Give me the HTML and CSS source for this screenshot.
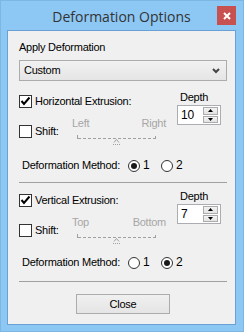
FILE: index.html
```html
<!DOCTYPE html>
<html lang="en">
  <head>
    <meta charset="UTF-8" />
    <meta name="viewport" content="width=device-width, initial-scale=1.0" />
    <title>Deformation Options</title>
    <link rel="stylesheet" href="styles.css">
  </head>
  <body>
    <div class="window">
      <div class="titlebar">
        <span></span>
        <div class="title">Deformation Options</div>
        <div class="close-x">
          <svg width="8" height="8" viewBox="0 0 8 8"><path d="M1 1L7 7M7 1L1 7" stroke="#fff" stroke-width="2"/></svg>
        </div>
      </div>

      <div class="client">
        <div class="label">Apply Deformation</div>
        <div class="select">
          <span>Custom</span>
          <svg width="8" height="6" viewBox="0 0 8 6"><path d="M1 1l3 3 3-3" stroke="#444" stroke-width="2" fill="none"/></svg>
        </div>

        <!-- horizontal -->
        <div class="section">
          <div class="left">
            <div class="check-row">
              <span class="checkbox"><svg width="11" height="11" viewBox="0 0 11 11"><path d="M1.5 5l2.5 3 5.5-6.5" stroke="#000" stroke-width="2" fill="none"/></svg></span>
              <span>Horizontal Extrusion:</span>
            </div>
            <div class="shift-row">
              <div class="check-row shift">
                <span class="checkbox"></span>
                <span>Shift:</span>
              </div>
              <div class="slider">
                <div class="slider-ends"><span>Left</span><span>Right</span></div>
                <svg class="track" width="96" height="12" viewBox="0 0 96 12">
                  <path d="M7.5 2v4M85.5 3v3" stroke="#a0a0a0"/>
                  <path d="M8 5.5h77" stroke="#a0a0a0" stroke-dasharray="3 2"/>
                  <path d="M44 9.5l2.5-3 2.5 3" stroke="#a0a0a0" fill="none"/>
                  <path d="M43 11.5h7" stroke="#a0a0a0" stroke-dasharray="1 1"/>
                </svg>
              </div>
            </div>
          </div>
          <div class="depth">
            <div class="depth-label">Depth</div>
            <div class="spin">
              <span>10</span>
              <div class="spin-btns">
                <div class="spin-btn"><svg width="5" height="3" viewBox="0 0 5 3"><path d="M0 3h5L2.5 0z" fill="#000"/></svg></div>
                <div class="spin-btn"><svg width="5" height="3" viewBox="0 0 5 3"><path d="M0 0h5L2.5 3z" fill="#000"/></svg></div>
              </div>
            </div>
          </div>
        </div>
        <div class="method-row first">
          <span class="method-text">Deformation Method:</span>
          <span class="radio-opt"><span class="radio checked"></span>1</span>
          <span class="radio-opt"><span class="radio"></span>2</span>
        </div>
        <div class="separator first"></div>

        <!-- vertical -->
        <div class="section second">
          <div class="left">
            <div class="check-row">
              <span class="checkbox"><svg width="11" height="11" viewBox="0 0 11 11"><path d="M1.5 5l2.5 3 5.5-6.5" stroke="#000" stroke-width="2" fill="none"/></svg></span>
              <span>Vertical Extrusion:</span>
            </div>
            <div class="shift-row">
              <div class="check-row shift">
                <span class="checkbox"></span>
                <span>Shift:</span>
              </div>
              <div class="slider">
                <div class="slider-ends"><span>Top</span><span>Bottom</span></div>
                <svg class="track" width="96" height="12" viewBox="0 0 96 12">
                  <path d="M7.5 2v4M85.5 3v3" stroke="#a0a0a0"/>
                  <path d="M8 5.5h77" stroke="#a0a0a0" stroke-dasharray="3 2"/>
                  <path d="M44 9.5l2.5-3 2.5 3" stroke="#a0a0a0" fill="none"/>
                  <path d="M43 11.5h7" stroke="#a0a0a0" stroke-dasharray="1 1"/>
                </svg>
              </div>
            </div>
          </div>
          <div class="depth">
            <div class="depth-label">Depth</div>
            <div class="spin">
              <span>7</span>
              <div class="spin-btns">
                <div class="spin-btn"><svg width="5" height="3" viewBox="0 0 5 3"><path d="M0 3h5L2.5 0z" fill="#000"/></svg></div>
                <div class="spin-btn"><svg width="5" height="3" viewBox="0 0 5 3"><path d="M0 0h5L2.5 3z" fill="#000"/></svg></div>
              </div>
            </div>
          </div>
        </div>
        <div class="method-row">
          <span class="method-text">Deformation Method:</span>
          <span class="radio-opt"><span class="radio"></span>1</span>
          <span class="radio-opt"><span class="radio checked"></span>2</span>
        </div>
        <div class="separator"></div>

        <button class="close-btn">Close</button>
      </div>
    </div>
  </body>
</html>
```

FILE: styles.css
```css
body {
  margin: 0;
  font-family: "Liberation Sans", Arial, sans-serif;
  font-size: 11px;
  line-height: 13px;
  letter-spacing: -0.25px;
  color: #000;
}

.window {
  width: 244px;
  height: 332px;
  box-sizing: border-box;
  background-color: #8dc7f4;
  border: 1px solid #7db5e3;
  padding: 0 7px 6px 6px;
  display: flex;
  flex-direction: column;
}

.titlebar {
  height: 29px;
  display: grid;
  grid-template-columns: 1fr auto 1fr;
}

.titlebar .title {
  font-family: "Open Sans", "Noto Sans", sans-serif;
  font-size: 14px;
  line-height: 29px;
  letter-spacing: 0;
  color: #333;
  padding-top: 1px;
}

.close-x {
  justify-self: end;
  margin-top: 5px;
  width: 19px;
  height: 19px;
  background-color: #c75050;
  display: flex;
  justify-content: center;
  align-items: center;
}

.client {
  flex: 1;
  background-color: #f0f0f0;
  border: 1px solid #6aa0d3;
  padding: 10px 8px 0 11px;
  display: flex;
  flex-direction: column;
}

.select {
  margin-top: 6px;
  height: 21px;
  box-sizing: border-box;
  border: 1px solid #acacac;
  background: linear-gradient(#f2f2f2, #e5e5e5);
  display: flex;
  align-items: center;
  justify-content: space-between;
  padding: 0 6px 0 4px;
}

.section {
  display: flex;
  margin-top: 10px;
}

.section.second {
  margin-top: 7px;
}

.left {
  width: 158px;
}

.check-row {
  display: flex;
  align-items: center;
  gap: 3px;
  margin-top: 4px;
}

.checkbox {
  width: 13px;
  height: 13px;
  box-sizing: border-box;
  border: 1px solid #333;
  background-color: #fff;
  display: flex;
}

.shift-row {
  display: flex;
  align-items: flex-start;
  margin-top: 9px;
}

.check-row.shift {
  width: 51px;
  margin-top: 8px;
}

.slider {
  width: 96px;
}

.slider-ends {
  display: flex;
  justify-content: space-between;
  color: #a6a6a6;
  padding-left: 2px;
}

.slider .track {
  display: block;
  margin-top: 3px;
}

.depth {
  display: flex;
  flex-direction: column;
}

.depth-label {
  padding-left: 3px;
}

.spin {
  margin-top: 1px;
  width: 44px;
  height: 20px;
  box-sizing: border-box;
  border: 1px solid #abadb3;
  background-color: #fff;
  display: flex;
  justify-content: space-between;
  padding: 1px 2px 1px 3px;
}

.spin span {
  line-height: 17px;
  font-size: 12px;
}

.spin-btns {
  display: flex;
  flex-direction: column;
  gap: 1px;
}

.spin-btn {
  width: 15px;
  height: 8px;
  box-sizing: border-box;
  border: 1px solid #acacac;
  background: linear-gradient(#f3f3f3, #e3e3e3);
  display: flex;
  justify-content: center;
  align-items: center;
}

.method-row {
  display: flex;
  align-items: center;
  margin-top: 12px;
  padding-left: 3px;
}

.method-row.first {
  margin-top: 14px;
}

.method-text {
  width: 106px;
}

.radio-opt {
  width: 33px;
  display: flex;
  align-items: center;
  gap: 3px;
  font-size: 12px;
}

.radio {
  width: 12px;
  height: 12px;
  box-sizing: border-box;
  border: 1px solid #333;
  border-radius: 50%;
  background-color: #fff;
  display: flex;
  justify-content: center;
  align-items: center;
}

.radio.checked::after {
  content: "";
  width: 6px;
  height: 6px;
  border-radius: 50%;
  background-color: #1a1a1a;
}

.separator {
  margin-top: 12px;
  border-top: 1px solid #a0a0a0;
}

.separator.first {
  margin-top: 10px;
}

.close-btn {
  margin: 12px auto 0;
  width: 94px;
  height: 20px;
  border: 1px solid #acacac;
  background: linear-gradient(#f0f0f0, #e5e5e5);
  font-family: "Liberation Sans", Arial, sans-serif;
  font-size: 11px;
  letter-spacing: -0.25px;
  color: #000;
  padding: 0;
}
```
